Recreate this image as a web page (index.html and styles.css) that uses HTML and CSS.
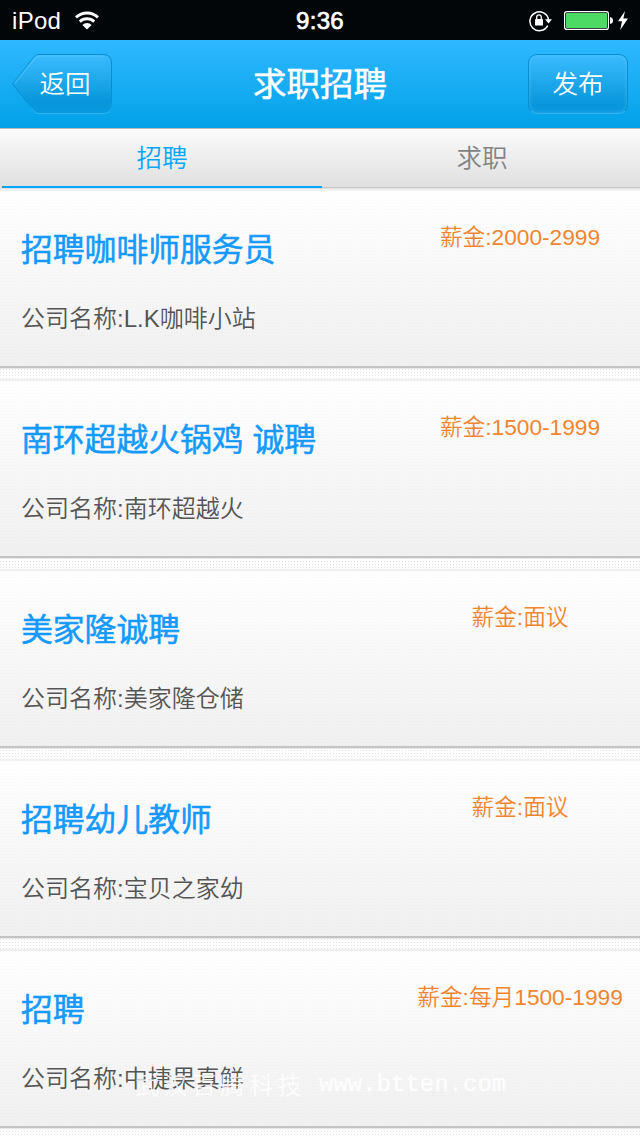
FILE: index.html
```html
<!DOCTYPE html>
<html lang="zh-CN">
<head>
<meta charset="utf-8">
<title>求职招聘</title>
<link rel="stylesheet" href="styles.css">
</head>
<body>
<div class="screen">
  <div class="status">
    <div class="carrier"><span>iPod</span>
      <svg class="wifi" width="26" height="20" viewBox="0 0 26 20" fill="none" stroke="#fff" stroke-width="2.900"><path d="M2 7.400A16 16 0 0 1 24 7.400"/><path d="M5.800 11.600A10.500 10.500 0 0 1 20.200 11.600"/><path d="M13 19.500L8.400 15A6.500 6.500 0 0 1 17.600 15Z" fill="#fff" stroke="none"/></svg>
    </div>
    <div class="clock">9:36</div>
    <div class="indicators">
      <svg width="24" height="22" viewBox="0 0 24 22"><path d="M18.700 15.600A9.400 9.400 0 1 1 19.600 9.800" fill="none" stroke="#fff" stroke-width="1.500"/><path d="M16 9.300H23L19.500 13.600Z" fill="#fff"/><rect x="6" y="9" width="8" height="6.500" rx=".6" fill="#fff"/><path d="M7.700 9.500V7.200A2.300 2.300 0 0 1 12.300 7.200V9.500" fill="none" stroke="#fff" stroke-width="1.300"/></svg>
      <svg class="battery" width="49" height="19" viewBox="0 0 49 19"><rect x=".6" y=".6" width="43.800" height="17.800" rx="2.200" fill="none" stroke="#fff" stroke-width="1.200"/><rect x="2" y="2" width="41" height="15" rx=".8" fill="#4cd964"/><path d="M46 6Q49 6.500 49 9.500T46 13Z" fill="#fff"/></svg>
      <svg class="bolt" width="10" height="19" viewBox="0 0 10 19"><path d="M7 0L0 10.300H4L2.200 19L10 7.600H5.400Z" fill="#fff"/></svg>
    </div>
  </div>
  <header class="nav">
    <button class="back">
      <svg class="back-shape" width="101" height="61" viewBox="0 0 101 61">
        <defs>
          <linearGradient id="fill" x1="0" y1="0" x2="0" y2="1"><stop offset="0" stop-color="#3bbcff"/><stop offset=".8" stop-color="#0797da"/><stop offset="1" stop-color="#0799de"/></linearGradient>
          <linearGradient id="edge" x1="0" y1="0" x2="0" y2="1"><stop offset="0" stop-color="#078cd3"/><stop offset=".8" stop-color="#0592d4"/><stop offset="1" stop-color="#2fb5f3"/></linearGradient>
        </defs>
        <path d="M.5 30L19 6.500Q24 .5 26 .5H91Q99.500 .5 99.500 9V51Q99.500 59.500 91 59.500H26Q24 59.500 19 53.500Z" fill="url(#fill)" stroke="url(#edge)"/>
        <path d="M2.500 29.500L20.500 7.500Q24 2 27 2H90" fill="none" stroke="#5ccaff" stroke-opacity=".45" stroke-width="1.500"/>
      </svg>
      <span class="back-label">返回</span>
    </button>
    <h1 class="title">求职招聘</h1>
    <button class="publish">发布</button>
  </header>
  <div class="tabs">
    <div class="tab active">招聘</div>
    <div class="tab">求职</div>
  </div>
  <main class="list">
    <article class="card"><div class="info"><h2>招聘咖啡师服务员</h2><p>公司名称:L.K咖啡小站</p></div><div class="pay">薪金:2000-2999</div></article>
    <article class="card"><div class="info"><h2>南环超越火锅鸡 诚聘</h2><p>公司名称:南环超越火</p></div><div class="pay">薪金:1500-1999</div></article>
    <article class="card"><div class="info"><h2>美家隆诚聘</h2><p>公司名称:美家隆仓储</p></div><div class="pay">薪金:面议</div></article>
    <article class="card"><div class="info"><h2>招聘幼儿教师</h2><p>公司名称:宝贝之家幼</p></div><div class="pay">薪金:面议</div></article>
    <article class="card"><div class="info"><h2>招聘</h2><p>公司名称:中捷果真鲜</p></div><div class="pay">薪金:每月1500-1999</div></article>
  </main>
  <div class="watermark"><span class="mark-name">武汉百腾科技</span><span class="mark-url">www.btten.com</span></div>
</div>
</body>
</html>
```
FILE: styles.css
```css
* { box-sizing: border-box; }
body, h1, h2, p { margin: 0; }
body { background: #fff; }
button { border: 0; padding: 0; background: none; font: inherit; color: #fff; }
svg { display: block; flex: none; }

.screen {
  position: relative;
  width: 640px;
  height: 1136px;
  overflow: hidden;
  font-family: "Liberation Sans", "Noto Sans CJK SC DemiLight", "Noto Sans CJK SC", sans-serif;
  font-weight: 350;
  background: conic-gradient(at 1px 1px, transparent 270deg, #e2e2e2 0) 0 0 / 3px 3px #fff;
}

.status {
  display: grid;
  grid-template-columns: 1fr auto 1fr;
  align-items: center;
  height: 40px;
  padding: 0 12px;
  background: #020609;
  color: #fff;
}
.carrier { display: flex; align-items: center; gap: 13px; font-size: 24px; line-height: 40px; letter-spacing: .3px; }
.carrier span { padding-top: 1px; }
.wifi { margin-top: -2px; }
.clock { font: 24px/40px "Liberation Sans", sans-serif; padding-top: 1px; letter-spacing: .3px; -webkit-text-stroke: .7px #fff; }
.indicators { display: flex; align-items: center; justify-content: flex-end; }
.battery { margin-left: 11px; }
.bolt { margin-left: 5px; }

.nav {
  display: grid;
  grid-template-columns: 100px 1fr 100px;
  align-items: start;
  height: 88px;
  padding: 14px 12px 0;
  background: linear-gradient(#2fb8ff, #02a1e8);
  color: #fff;
}
.back { display: grid; width: 101px; height: 61px; }
.back-shape, .back-label { grid-area: 1 / 1; }
.back-label { padding-left: 5px; font-size: 25.500px; line-height: 60px; }
.title { text-align: center; font-size: 33.500px; line-height: 62px; font-weight: 400; -webkit-text-stroke: .7px; }
.publish {
  height: 60px;
  font-size: 25.500px;
  line-height: 58px;
  border-radius: 9px;
  border: 1px solid #078fd3;
  border-bottom-color: #2fb5f3;
  background: linear-gradient(#3bbcff, #0797da 85%, #0799de);
  box-shadow: inset 0 0 4px rgba(100, 205, 255, .5);
}

.tabs {
  display: flex;
  height: 61px;
  padding-left: 2px;
  margin-right: -2px;
  border-top: 1px solid #b9b9b9;
  border-bottom: 1px solid #e0e0e0;
  background: linear-gradient(#fbfbfb, #dfdfdf);
  color: #838383;
}
.tab { flex: 1; height: 59px; text-align: center; font-size: 25.500px; line-height: 58px; border-bottom: 1px solid #c8c8c8; }
.tab.active { color: #08a7fa; border-bottom: 2px solid #08a7ff; }

.list { display: flex; flex-direction: column; gap: 11px; }
.card {
  display: grid;
  grid-template-columns: 400px 240px;
  height: 179px;
  flex: none;
  border-top: 2px solid #f0f0f0;
  border-bottom: 2px solid #c3c3c3;
  box-shadow: 0 1px #e8e8e8;
  background:
    conic-gradient(at 1px 1px, transparent 270deg, rgba(0, 0, 0, .018) 0) 0 0 / 3px 3px,
    linear-gradient(#fff, #f0f0f0);
}
.info { padding: 35px 0 0 21px; }
.info h2 { font-size: 31.800px; line-height: 48px; font-weight: 400; -webkit-text-stroke: .7px; color: #1499ff; white-space: nowrap; }
.info p { margin-top: 25px; font-size: 24px; line-height: 40px; color: #555; }
.pay { padding-top: 31px; text-align: center; font-size: 22.700px; line-height: 30px; color: #f08530; white-space: nowrap; }

.watermark {
  position: absolute;
  left: 135px;
  top: 1067px;
  display: flex;
  gap: 15px;
  color: #fff;
  opacity: .85;
  font-size: 24px;
  line-height: 34px;
}
.mark-name { font-family: "Noto Sans CJK SC", sans-serif; font-weight: 350; letter-spacing: 4.500px; width: 169px; white-space: nowrap; }
.mark-url { font-family: "Liberation Mono", monospace; font-weight: 400; padding-top: 1px; -webkit-text-stroke: .6px; }
```
